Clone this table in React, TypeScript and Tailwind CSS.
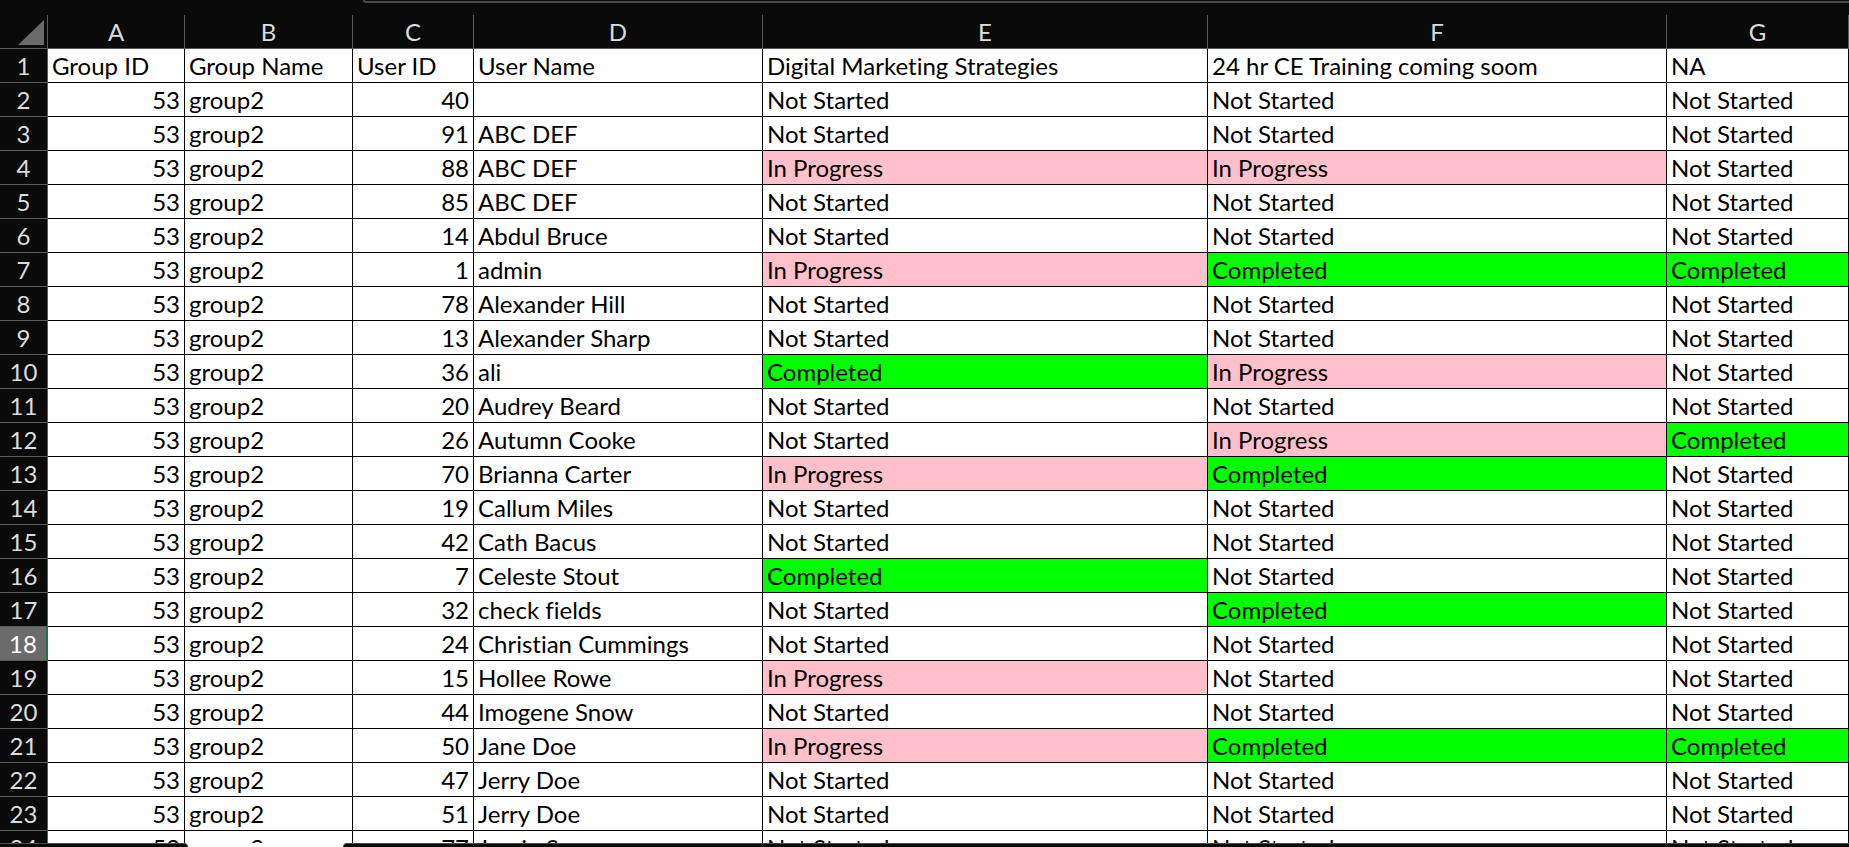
import React from 'react';

type Status = 'NS' | 'IP' | 'C';

const LABEL: Record<Status, string> = {
  NS: 'Not Started',
  IP: 'In Progress',
  C: 'Completed',
};

const FILL: Record<Status, string> = {
  NS: 'bg-white',
  IP: 'bg-[#ffc0cb]',
  C: 'bg-[#00ff00]',
};

const rows: [number, string, Status, Status, Status][] = [
  [40, '', 'NS', 'NS', 'NS'],
  [91, 'ABC DEF', 'NS', 'NS', 'NS'],
  [88, 'ABC DEF', 'IP', 'IP', 'NS'],
  [85, 'ABC DEF', 'NS', 'NS', 'NS'],
  [14, 'Abdul Bruce', 'NS', 'NS', 'NS'],
  [1, 'admin', 'IP', 'C', 'C'],
  [78, 'Alexander Hill', 'NS', 'NS', 'NS'],
  [13, 'Alexander Sharp', 'NS', 'NS', 'NS'],
  [36, 'ali', 'C', 'IP', 'NS'],
  [20, 'Audrey Beard', 'NS', 'NS', 'NS'],
  [26, 'Autumn Cooke', 'NS', 'IP', 'C'],
  [70, 'Brianna Carter', 'IP', 'C', 'NS'],
  [19, 'Callum Miles', 'NS', 'NS', 'NS'],
  [42, 'Cath Bacus', 'NS', 'NS', 'NS'],
  [7, 'Celeste Stout', 'C', 'NS', 'NS'],
  [32, 'check fields', 'NS', 'C', 'NS'],
  [24, 'Christian Cummings', 'NS', 'NS', 'NS'],
  [15, 'Hollee Rowe', 'IP', 'NS', 'NS'],
  [44, 'Imogene Snow', 'NS', 'NS', 'NS'],
  [50, 'Jane Doe', 'IP', 'C', 'C'],
  [47, 'Jerry Doe', 'NS', 'NS', 'NS'],
  [51, 'Jerry Doe', 'NS', 'NS', 'NS'],
  [77, 'Jessie Spears', 'NS', 'NS', 'NS'],
];

const letters = ['A', 'B', 'C', 'D', 'E', 'F', 'G'];
const headers = ['Group ID', 'Group Name', 'User ID', 'User Name', 'Digital Marketing Strategies', '24 hr CE Training coming soom', 'NA'];

const cell = 'h-[34px] border-r border-b border-black leading-[33px] px-[4px] whitespace-nowrap overflow-hidden';

function RowHead({ n }: { n: number }) {
  const selected = n === 18;
  return (
    <div
      className={
        'h-[34px] border-b border-[#5a5a5a] leading-[33px] text-center ' +
        (selected
          ? 'bg-[#6b6b6b] text-white border-r-2 border-r-[#217346]'
          : 'bg-[#0a0a0a] text-[#dcdcdc] border-r border-r-[#5a5a5a]')
      }
    >
      {n}
    </div>
  );
}

export default function App() {
  return (
    <div
      className="w-[1849px] h-[847px] flex flex-col overflow-hidden bg-[#0a0a0a] text-[24px] text-black [font-variant-ligatures:none]"
      style={{ fontFamily: 'Lato, "Liberation Sans", sans-serif' }}
    >
      {/* ribbon edge */}
      <div className="h-[15px] shrink-0">
        <div className="ml-[363px] h-[3px] border-b-2 border-l-2 border-[#4a4a4a] rounded-bl-[6px]" />
      </div>

      <div className="flex-1 overflow-hidden bg-white">
        <div className="grid grid-cols-[48px_137px_168px_121px_289px_445px_459px_182px]">
          {/* corner */}
          <div className="h-[34px] bg-[#0a0a0a] border-r border-b border-[#5a5a5a] flex items-end justify-end pr-[3px] pb-[3px]">
            <svg width="26" height="25" viewBox="0 0 26 25">
              <polygon points="26,0 26,25 0,25" fill="#6b6b6b" />
            </svg>
          </div>
          {letters.map((l) => (
            <div key={l} className="h-[34px] bg-[#0a0a0a] border-r border-b border-[#5a5a5a] text-[#dcdcdc] text-center leading-[33px]">
              {l}
            </div>
          ))}

          <RowHead n={1} />
          {headers.map((h) => (
            <div key={h} className={cell}>
              {h}
            </div>
          ))}

          {rows.map((r, i) => (
            <React.Fragment key={i}>
              <RowHead n={i + 2} />
              <div className={cell + ' text-right'}>53</div>
              <div className={cell}>group2</div>
              <div className={cell + ' text-right'}>{r[0]}</div>
              <div className={cell}>{r[1]}</div>
              <div className={cell + ' ' + FILL[r[2]]}>{LABEL[r[2]]}</div>
              <div className={cell + ' ' + FILL[r[3]]}>{LABEL[r[3]]}</div>
              <div className={cell + ' ' + FILL[r[4]]}>{LABEL[r[4]]}</div>
            </React.Fragment>
          ))}
        </div>
      </div>

      {/* sheet tab bar edge */}
      <div className="h-[4px] shrink-0 flex bg-white">
        <div className="w-[188px] bg-[#0a0a0a] border-t border-r border-[#4a4a4a] rounded-tr-[4px]" />
        <div className="w-[155px]" />
        <div className="flex-1 bg-[#0a0a0a] border-t border-l border-[#4a4a4a] rounded-tl-[4px]" />
      </div>
    </div>
  );
}
